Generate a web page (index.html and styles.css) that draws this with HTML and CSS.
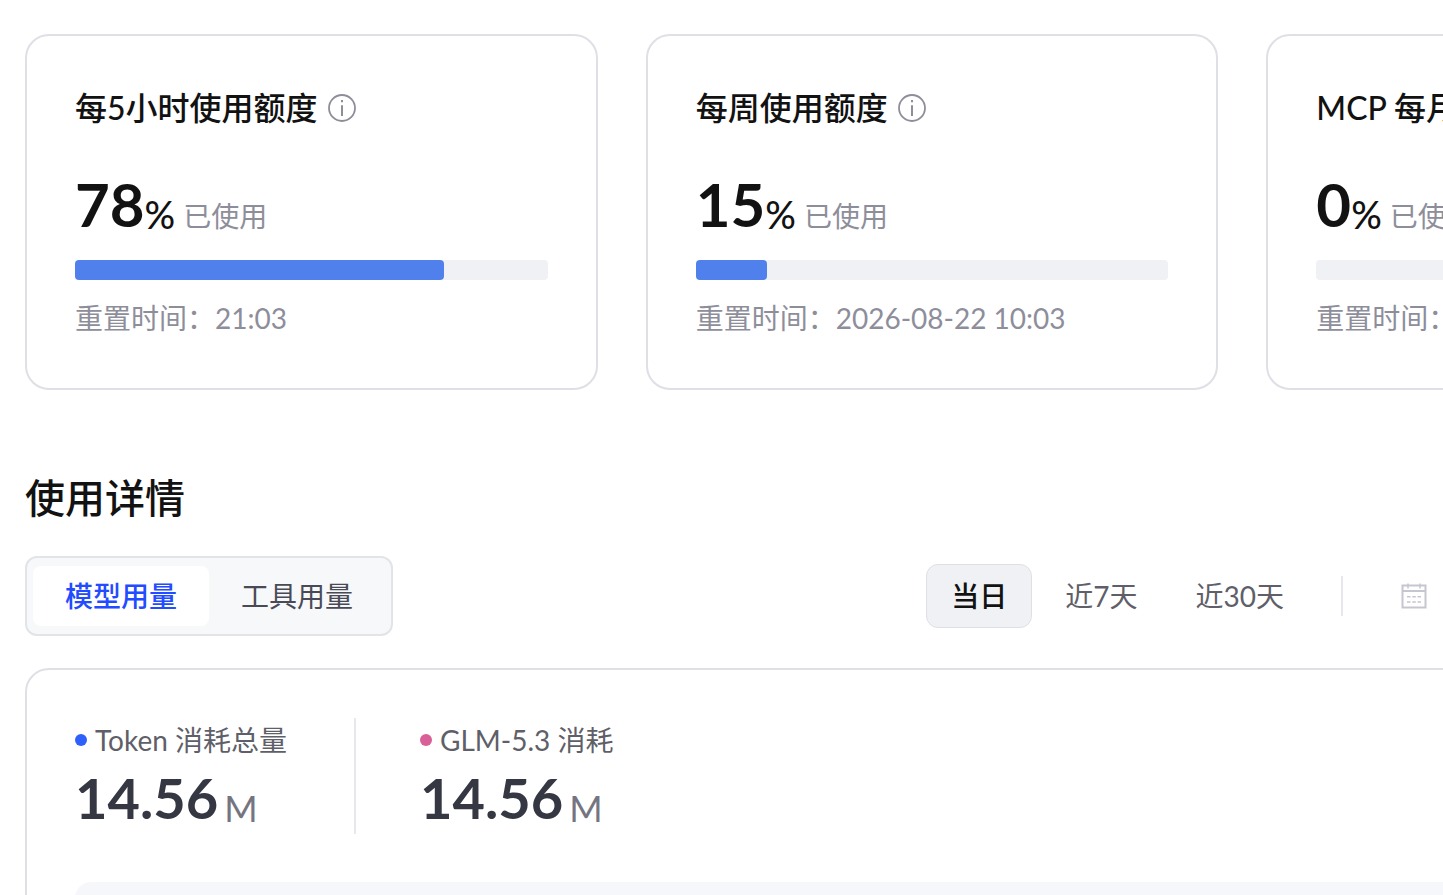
FILE: index.html
```html
<!DOCTYPE html>
<html lang="zh-CN">
<head>
<meta charset="utf-8">
<meta name="viewport" content="width=device-width, initial-scale=1">
<title>使用详情</title>
<link rel="stylesheet" href="styles.css">
</head>
<body>
<svg class="sprite" aria-hidden="true">
  <symbol id="info" viewBox="0 0 28 28">
    <circle cx="14" cy="14" r="13" fill="none" stroke="currentColor" stroke-width="1.800"/>
    <path d="M14 11.300v10.700M14 6v2.200" stroke="currentColor" stroke-width="2"/>
  </symbol>
</svg>
<main class="page">
  <section class="cards">
    <article class="card">
      <h2 class="card-title">每5小时使用额度 <svg class="info"><use href="#info"/></svg></h2>
      <p class="usage"><strong class="usage-value">78</strong><span class="usage-sign">%</span><span class="usage-note">已使用</span></p>
      <div class="bar"><div class="bar-fill" style="width:78%"></div></div>
      <p class="reset">重置时间：21:03</p>
    </article>
    <article class="card">
      <h2 class="card-title">每周使用额度 <svg class="info"><use href="#info"/></svg></h2>
      <p class="usage"><strong class="usage-value">15</strong><span class="usage-sign">%</span><span class="usage-note">已使用</span></p>
      <div class="bar"><div class="bar-fill" style="width:15%"></div></div>
      <p class="reset">重置时间：2026-08-22 10:03</p>
    </article>
    <article class="card">
      <h2 class="card-title">MCP 每月</h2>
      <p class="usage"><strong class="usage-value">0</strong><span class="usage-sign">%</span><span class="usage-note">已使用</span></p>
      <div class="bar"></div>
      <p class="reset">重置时间：</p>
    </article>
  </section>

  <h1 class="heading">使用详情</h1>

  <div class="toolbar">
    <div class="tabs">
      <button class="tab tab-active" type="button">模型用量</button>
      <button class="tab" type="button">工具用量</button>
    </div>
    <div class="filters">
      <button class="range range-active" type="button">当日</button>
      <button class="range" type="button">近7天</button>
      <button class="range" type="button">近30天</button>
      <span class="filter-divider"></span>
      <button class="picker" type="button" aria-label="日期">
        <svg class="calendar" viewBox="0 0 26 26" fill="none" stroke="currentColor" stroke-width="2">
          <path d="M1.5 2.500h23v22h-23zM1.5 8h23"/>
          <path d="M7 .5v5M19 .5v5" stroke-width="1.5"/>
          <path d="M6 13.800h3.5M11.3 13.800h3.5M16.500 13.800H20M6 19h3.500M11.300 19h3.500M16.500 19H20" stroke-width="1.600"/>
        </svg>
      </button>
    </div>
  </div>

  <section class="panel">
    <div class="stats">
      <div class="stat">
        <p class="stat-label"><span class="dot dot-blue"></span>Token 消耗总量</p>
        <p class="stat-number"><strong class="stat-value">14.56</strong><span class="stat-unit">M</span></p>
      </div>
      <div class="stat">
        <p class="stat-label"><span class="dot dot-pink"></span>GLM-5.3 消耗</p>
        <p class="stat-number"><strong class="stat-value">14.56</strong><span class="stat-unit">M</span></p>
      </div>
    </div>
    <div class="chart"></div>
  </section>
</main>
</body>
</html>
```

FILE: styles.css
```css
* {
  box-sizing: border-box;
}

body {
  margin: 0;
  overflow: hidden;
  background: #fff;
  color: #121212;
  font-family: Lato, "Noto Sans CJK SC", sans-serif;
  font-size: 28px;
  line-height: 44px;
}

h1, h2, p {
  margin: 0;
}

button {
  font: inherit;
  color: inherit;
  border: 0;
  background: none;
  white-space: nowrap;
}

.sprite {
  display: none;
}

.page {
  width: 128vw;
  padding: 34px 8px 0 25px;
}

.cards {
  display: grid;
  grid-template-columns: repeat(3, 1fr);
  gap: 48px;
}

.card {
  padding: 48px;
  border: 2px solid #dfdfe6;
  border-radius: 24px;
}

.card-title {
  display: flex;
  align-items: center;
  gap: 10px;
  font-size: 32px;
  font-weight: 500;
  line-height: 48px;
}

.info {
  width: 28px;
  height: 28px;
  color: #8e8e9b;
}

.usage {
  display: flex;
  align-items: flex-end;
  height: 80px;
  margin: 32px 0 16px;
}

.usage-value {
  font-size: 60px;
  font-weight: 700;
  line-height: 80px;
}

.usage-sign {
  font-size: 38px;
  font-weight: 500;
  line-height: 60px;
}

.usage-note {
  margin-left: 8px;
  line-height: 56px;
  color: #8e8e9b;
}

.bar {
  height: 20px;
  border-radius: 4px;
  background: #f0f1f5;
}

.bar-fill {
  height: 100%;
  border-radius: 4px;
  background: #5080ec;
}

.reset {
  margin-top: 16px;
  color: #8e8e9b;
}

.heading {
  margin: 80px 0 30px;
  font-size: 40px;
  font-weight: 500;
  line-height: 56px;
}

.toolbar {
  display: flex;
  align-items: center;
  justify-content: space-between;
}

.tabs {
  display: flex;
  padding: 8px 6px;
  border: 2px solid #e2e4e8;
  border-radius: 12px;
  background: #f7f8fa;
}

.tab {
  height: 60px;
  padding: 0 32px;
  border-radius: 8px;
  color: #4a4a57;
}

.tab-active {
  background: #fff;
  color: #234bff;
  font-weight: 500;
}

.filters {
  display: flex;
  align-items: center;
  gap: 8px;
}

.range {
  height: 64px;
  padding: 0 24px;
  border: 1px solid transparent;
  border-radius: 12px;
  color: #5f5f69;
}

.range-active {
  border-color: #dfdfe6;
  background: #f0f1f5;
  color: #121212;
  font-weight: 500;
}

.filter-divider {
  width: 2px;
  height: 40px;
  margin: 0 24px;
  background: #e6e6ec;
}

.picker {
  display: flex;
  width: 464px;
  padding: 0 26px;
  color: #c5c6d0;
}

.calendar {
  width: 26px;
  height: 26px;
}

.panel {
  margin-top: 32px;
  padding: 48px;
  border: 2px solid #dfdfe6;
  border-radius: 24px;
}

.stats {
  display: flex;
}

.stat {
  min-width: 215px;
}

.stat + .stat {
  margin-left: 64px;
  padding-left: 64px;
  border-left: 2px solid #e8e8ec;
}

.stat-label {
  display: flex;
  align-items: center;
  gap: 8px;
  color: #5f5f69;
}

.dot {
  width: 12px;
  height: 12px;
  border-radius: 50%;
}

.dot-blue {
  background: #2e61fa;
}

.dot-pink {
  background: #d85f97;
}

.stat-number {
  display: flex;
  align-items: flex-end;
  gap: 6px;
  height: 72px;
}

.stat-value {
  color: #353842;
  font-size: 56px;
  font-weight: 700;
  line-height: 72px;
}

.stat-unit {
  color: #757581;
  font-size: 36px;
  line-height: 52px;
}

.chart {
  height: 400px;
  margin-top: 48px;
  border-radius: 16px;
  background: #f6f7fa;
}
```
